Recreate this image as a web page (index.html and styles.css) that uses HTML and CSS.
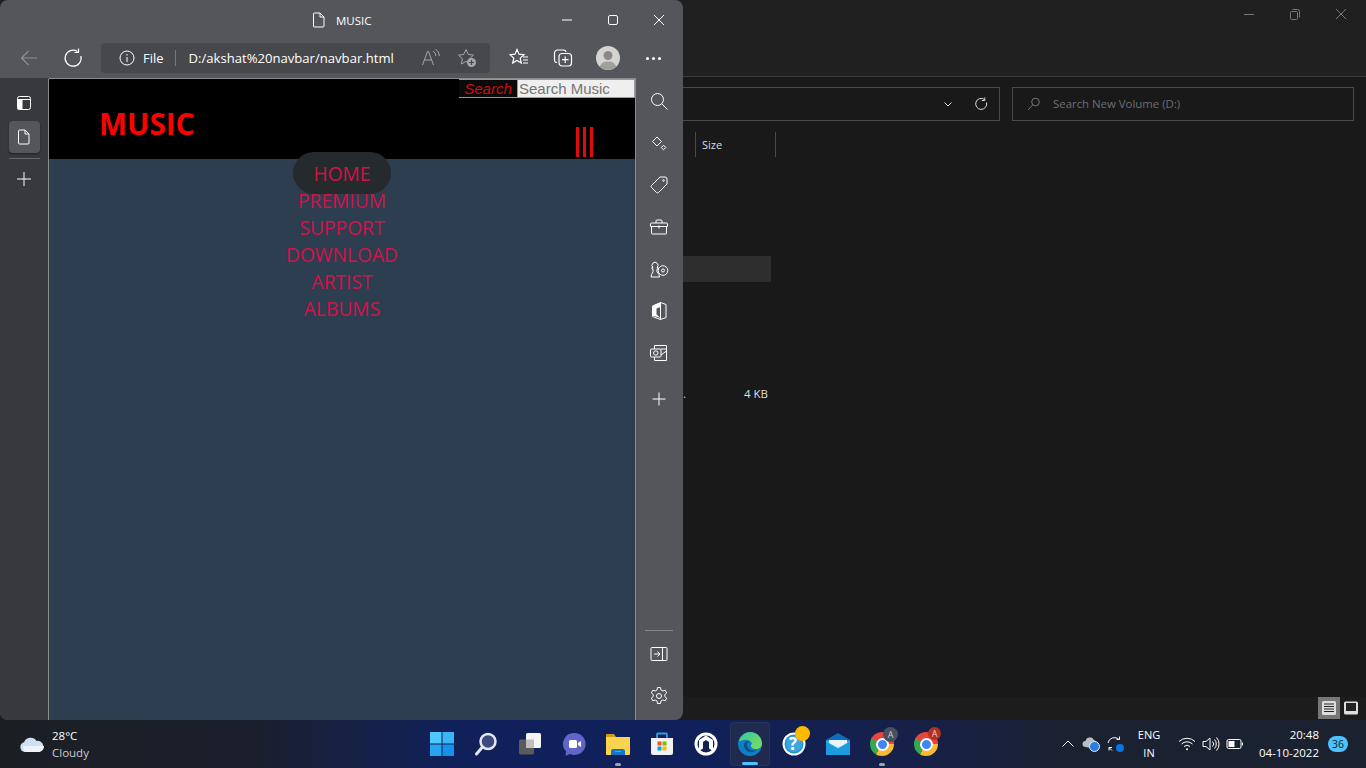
FILE: index.html
```html
<!DOCTYPE html>
<html lang="en">
<head>
<meta charset="UTF-8">
<meta name="viewport" content="width=device-width, initial-scale=1.0">
<title>MUSIC</title>
<link rel="stylesheet" href="styles.css">
</head>
<body>

<!-- Explorer window behind the browser -->
<div class="explorer">
  <div class="exp-title">
    <svg class="exp-ctl" viewBox="0 0 12 12"><path d="M1 6.500h10"/></svg>
    <svg class="exp-ctl" viewBox="0 0 12 12"><path d="M1.500 4.500a1 1 0 0 1 1-1h5a1 1 0 0 1 1 1v6a1 1 0 0 1-1 1h-5a1 1 0 0 1-1-1zM3.500 1.500h5a2 2 0 0 1 2 2v6"/></svg>
    <svg class="exp-ctl" viewBox="0 0 12 12"><path d="M1 1l10 10M11 1L1 11"/></svg>
  </div>
  <div class="exp-bar">
    <div class="exp-address">
      <svg class="exp-chevron" viewBox="0 0 10 10"><path d="M1.500 3.500L5 7l3.500-3.500"/></svg>
      <svg class="exp-refresh" viewBox="0 0 14 14"><path d="M10.500 2.500a5.500 5.500 0 1 0 2 3M10.800 0.500v3h-3"/></svg>
    </div>
    <div class="exp-search">
      <svg class="exp-lens" viewBox="0 0 14 14"><circle cx="8.500" cy="5" r="3.800"/><path d="M5.800 7.800L1 13"/></svg>
      <span>Search New Volume (D:)</span>
    </div>
  </div>
  <div class="exp-head"><span class="exp-col">Size</span></div>
  <div class="exp-list">
    <div class="exp-selected"></div>
    <div class="exp-row"><span>.</span><span class="exp-size">4 KB</span></div>
  </div>
  <div class="exp-status">
    <div class="view-btn view-btn-on">
      <svg viewBox="0 0 16 16"><rect x="1" y="1" width="14" height="14" rx="1.500" fill="#ddd"/><path d="M3 4h10M3 6.500h10M3 9h10M3 11.500h10" stroke="#222"/></svg>
    </div>
    <div class="view-btn">
      <svg viewBox="0 0 16 16"><rect x="1" y="1.500" width="14" height="13" rx="1.500" fill="#ddd"/><rect x="3" y="3" width="10" height="8" fill="#222"/></svg>
    </div>
  </div>
</div>

<!-- Edge window -->
<div class="browser">
  <div class="titlebar">
    <div class="tab-title">
      <svg class="ico-16" viewBox="0 0 16 16"><path d="M3.500 1h5.500l4 4v9a1 1 0 0 1-1 1h-8.500a1 1 0 0 1-1-1v-12a1 1 0 0 1 1-1zM9 1v4h4"/></svg>
      <span>MUSIC</span>
    </div>
    <div class="win-controls">
      <svg class="win-ctl" viewBox="0 0 12 12"><path d="M1 6h10"/></svg>
      <svg class="win-ctl" viewBox="0 0 12 12"><rect x="1.500" y="1.500" width="9" height="9" rx="1.500"/></svg>
      <svg class="win-ctl" viewBox="0 0 12 12"><path d="M1 1l10 10M11 1L1 11"/></svg>
    </div>
  </div>

  <div class="toolbar">
    <svg class="tool tool-back" viewBox="0 0 20 20"><path d="M18 10H2.500M9.500 3l-7 7 7 7"/></svg>
    <svg class="tool tool-reload" viewBox="0 0 20 20"><path d="M14.500 3.500a8 8 0 1 0 3.300 4.500M15.500 0.500v4h-4"/></svg>
    <div class="addressbar">
      <svg class="ico-16 info" viewBox="0 0 16 16"><circle cx="8" cy="8" r="7"/><path d="M8 7v5M8 4v1.500"/></svg>
      <span class="addr-file">File</span>
      <span class="addr-sep"></span>
      <span class="addr-url">D:/akshat%20navbar/navbar.html</span>
      <svg class="addr-ico read" viewBox="0 0 20 20"><path d="M1.500 17L6.500 3.500h1L12.500 17M3.500 12h7M12 3a6 6 0 0 1 3 5M14.500 1a9 9 0 0 1 4 7"/></svg>
      <svg class="addr-ico" viewBox="0 0 20 20"><path d="M9 1.500l2.300 5 5.200.6-3.900 3.600 1 5.300L9 13.400l-4.600 2.600 1-5.300-3.900-3.600 5.200-.6z"/><circle class="fill-grey" cx="14.500" cy="14.500" r="4.500"/><path class="plus-dark" d="M14.500 12v5M12 14.500h5"/></svg>
    </div>
    <svg class="tool tool-fav" viewBox="0 0 20 20"><path d="M8 1.500l2 4.700 5 .5-3.800 3.400 1.100 5-4.300-2.600-4.300 2.600 1.100-5L1 6.700l5-.5zM14 9h5M14 12h5M14 15h5"/></svg>
    <svg class="tool tool-coll" viewBox="0 0 20 20"><path d="M4 14.500a2.500 2.500 0 0 1-2.500-2.500V5A3 3 0 0 1 4.500 2h6a2.500 2.500 0 0 1 2.500 2"/><rect x="6" y="5.500" width="12.500" height="12.500" rx="3"/><path d="M12.200 8.500v6.500M9 11.700h6.500"/></svg>
    <div class="avatar">
      <svg viewBox="0 0 24 24"><circle cx="12" cy="12" r="12" fill="#d6d4d2"/><circle cx="12" cy="9.500" r="4.500" fill="#8a8987"/><path d="M3.800 20.500C5.500 16.500 8 15.500 12 15.500s6.500 1 8.200 5a12 12 0 0 1-16.400 0z" fill="#a09f9c"/></svg>
    </div>
    <div class="more"><i></i><i></i><i></i></div>
  </div>

  <div class="browser-body">
    <div class="tab-rail">
      <svg class="rail-ico" viewBox="0 0 16 16"><rect x="1.500" y="1.500" width="13" height="13" rx="2"/><path d="M1.500 4.500h13"/><rect class="fill-white" x="1.500" y="4.500" width="5" height="10"/></svg>
      <div class="rail-tab">
        <svg class="ico-16" viewBox="0 0 16 16"><path d="M3.500 1h5.500l4 4v9a1 1 0 0 1-1 1h-8.500a1 1 0 0 1-1-1v-12a1 1 0 0 1 1-1zM9 1v4h4"/></svg>
      </div>
      <div class="rail-line"></div>
      <svg class="rail-ico rail-plus" viewBox="0 0 16 16"><path d="M8 1v14M1 8h14"/></svg>
    </div>

    <div class="page">
      <div class="searchstrip">
        <label class="search-label">Search</label>
        <div class="search-input">Search Music</div>
      </div>
      <header class="site-head">
        <div class="logo">MUSIC</div>
        <div class="hamburger"><i></i><i></i><i></i></div>
      </header>
      <nav class="site-nav">
        <a class="nav-item active">HOME</a>
        <a class="nav-item">PREMIUM</a>
        <a class="nav-item">SUPPORT</a>
        <a class="nav-item">DOWNLOAD</a>
        <a class="nav-item">ARTIST</a>
        <a class="nav-item">ALBUMS</a>
      </nav>
    </div>

    <div class="side-rail">
      <svg class="side-ico" viewBox="0 0 20 20"><circle cx="8.500" cy="8.500" r="6"/><path d="M13 13l5.500 5.500"/></svg>
      <svg class="side-ico" viewBox="0 0 20 20"><path d="M8 4l4.500 4.500L8 13 3.500 8.500zM14.500 12.200l2.300 2.300-2.300 2.300-2.300-2.300z"/></svg>
      <svg class="side-ico" viewBox="0 0 20 20"><path d="M11 2h5a2 2 0 0 1 2 2v5L9.500 17.500a1.500 1.500 0 0 1-2 0l-5-5a1.500 1.500 0 0 1 0-2z"/><circle cx="14.500" cy="5.500" r=".8"/></svg>
      <svg class="side-ico" viewBox="0 0 20 20"><path d="M7 6V4a1 1 0 0 1 1-1h4a1 1 0 0 1 1 1v2M2.500 6h15a1 1 0 0 1 1 1v2.500h-17V7a1 1 0 0 1 1-1zM2.500 9.500V16a1 1 0 0 0 1 1h13a1 1 0 0 0 1-1V9.500M10 8.500v3"/></svg>
      <svg class="side-ico" viewBox="0 0 20 20"><path d="M2 18h8.500l-.5-2.500-2-2.500V10h1V8.500H8a3 3 0 1 0-4 0H3V10h1v3L2.500 15.500z"/><circle cx="14" cy="11.500" r="4.800"/><circle cx="14" cy="11.500" r="1.500"/></svg>
      <svg class="side-ico" viewBox="0 0 20 20"><path d="M11.500 1.500l5.500 2v13l-5.500 2-8-3V5zM11.500 1.500v17"/><path class="fill-white" d="M3.500 5l8-3.500v4.500l-4 1.500v6l4 3.500-8-2.500z"/></svg>
      <svg class="side-ico" viewBox="0 0 20 20"><path d="M5.500 6V2.500h12v15h-12V14M12 6h5.500M17.500 8l-5.500 4"/><rect x="1.500" y="6" width="10.500" height="8" rx="1"/><circle cx="6.800" cy="10" r="2.200"/></svg>
      <svg class="side-ico side-plus" viewBox="0 0 20 20"><path d="M10 3.500v13M3.500 10h13"/></svg>
      <div class="side-spacer"></div>
      <div class="side-line"></div>
      <svg class="side-ico" viewBox="0 0 20 20"><rect x="2" y="3.500" width="16" height="13" rx="1"/><path d="M13.500 3.500v13M5 10h6M8.500 7.500L11 10l-2.500 2.500"/></svg>
      <svg class="side-ico" viewBox="0 0 20 20"><circle cx="10" cy="10" r="2.500"/><path d="M8.500 1.500h3l.5 2.500 1.800 1 2.400-.8 1.500 2.600-1.900 1.700v2l1.900 1.700-1.500 2.600-2.400-.8-1.800 1-.5 2.500h-3l-.5-2.500-1.800-1-2.400.8-1.500-2.600 1.900-1.700v-2L2.300 6.800l1.500-2.600 2.400.8 1.800-1z"/></svg>
    </div>
  </div>
</div>

<!-- Windows 11 taskbar -->
<div class="taskbar">
  <div class="weather">
    <svg class="weather-ico" viewBox="0 0 26 20"><path d="M6 18a5 5 0 0 1-1-9.800A7 7 0 0 1 17.500 7 5.500 5.500 0 0 1 20 18z" fill="#cfe0f5"/><path d="M6 18a5 5 0 0 1-1-6h20a5.500 5.500 0 0 1-5 6z" fill="#eef3fa"/></svg>
    <div class="weather-text"><div>28°C</div><div class="weather-sub">Cloudy</div></div>
  </div>

  <div class="apps">
    <div class="app">
      <svg class="app-ico" viewBox="0 0 24 24"><path d="M0 0h11.500v11.500H0z" fill="#4fc8fb"/><path d="M12.500 0H24v11.500H12.500z" fill="#3ab6f7"/><path d="M0 12.500h11.500V24H0z" fill="#25a4f0"/><path d="M12.500 12.500H24V24H12.500z" fill="#1492ea"/></svg>
    </div>
    <div class="app">
      <svg class="app-ico" viewBox="0 0 24 24"><circle cx="14" cy="9.500" r="7.500" fill="#3b4a7d" stroke="#e3e6ee" stroke-width="2.500"/><path d="M8.500 15L2.500 22" stroke="#e3e6ee" stroke-width="3" stroke-linecap="round"/></svg>
    </div>
    <div class="app">
      <svg class="app-ico" viewBox="0 0 24 24"><rect x="1" y="7.500" width="15" height="15" rx="1.500" fill="#5a5a5a"/><rect x="8" y="1" width="15" height="15" rx="1.500" fill="#f5f5f5"/><rect x="8" y="7.500" width="8" height="8.500" fill="#bdbdbd"/></svg>
    </div>
    <div class="app">
      <svg class="app-ico" viewBox="0 0 24 24"><path d="M12.500 1a11 11 0 1 1-4.500 21l-4.500 2 .5-4.500A11 11 0 0 1 12.500 1z" fill="#6264c7"/><rect x="7" y="8" width="8" height="8" rx="1.500" fill="#fff"/><path d="M16 11l3-2v6l-3-2z" fill="#fff"/></svg>
    </div>
    <div class="app app-open">
      <svg class="app-ico" viewBox="0 0 24 24"><path d="M0 3a1 1 0 0 1 1-1h7l2 3h-10z" fill="#d69a0e"/><path d="M0 5h24v17a1 1 0 0 1-1 1H1a1 1 0 0 1-1-1z" fill="#fcd34d"/><path d="M5 19a2 2 0 0 1 2-2h10a2 2 0 0 1 2 2v4H5z" fill="#0e78c6"/><path d="M9 19.500h6" stroke="#49a8ea"/></svg>
    </div>
    <div class="app">
      <svg class="app-ico" viewBox="0 0 24 24"><path d="M7 6V2.500a1 1 0 0 1 1-1h8a1 1 0 0 1 1 1V6" fill="none" stroke="#2aa2e8" stroke-width="1.800"/><path d="M1 6h22v15a2 2 0 0 1-2 2H3a2 2 0 0 1-2-2z" fill="#f2f2f2"/><path d="M7.500 9.500h4v4h-4z" fill="#f25022"/><path d="M12.500 9.500h4v4h-4z" fill="#7fba00"/><path d="M7.500 14.500h4v4h-4z" fill="#00a4ef"/><path d="M12.500 14.500h4v4h-4z" fill="#ffb900"/></svg>
    </div>
    <div class="app">
      <svg class="app-ico" viewBox="0 0 24 24"><circle cx="12" cy="12" r="11.500" fill="#fff"/><circle cx="12" cy="12" r="8.500" fill="#14224f"/><path d="M12 3.500l7 4.500v11l-4-2.500V10l-3-2-3 2v6.500L5 19V8z" fill="#fff"/></svg>
    </div>
    <div class="app app-active">
      <svg class="app-ico" viewBox="0 0 24 24"><defs><linearGradient id="edgeG" x1="0" y1="0" x2="1" y2="1"><stop offset="0" stop-color="#36c5a0"/><stop offset="1" stop-color="#7fe05a"/></linearGradient></defs><circle cx="12" cy="12" r="12" fill="#0f7fc4"/><path d="M1 9C3 3 8 0 12 0c7 0 12 5 12 12 0 3-3 5-6 5-3 0-5-1-5-3 0-1 .5-1.500 1-2.500C13 9 9 7 6 8c-2 .5-4 1-5 1z" fill="url(#edgeG)"/><path d="M6 13c0 4 3 7 7 7 2 0 4-.5 6-2-1 .5-1.500 .5-3 .5-4 0-6-2-7-5-.5-2 1-3.500 3-4-3-1-6 0-6 3.500z" fill="#0b4f8c"/></svg>
      <span class="active-mark"></span>
    </div>
    <div class="app">
      <svg class="app-ico" viewBox="0 0 24 24"><circle cx="12" cy="12" r="11.500" fill="#fff"/><circle cx="12" cy="12" r="9.500" fill="#1f94d8"/><circle cx="12" cy="12" r="8" fill="#fff" opacity=".15"/></svg>
      <span class="help-q">?</span>
      <span class="help-dot"></span>
    </div>
    <div class="app">
      <svg class="app-ico" viewBox="0 0 24 24"><path d="M0 8L12 1l12 7v1H0z" fill="#0f6cbd"/><path d="M0 8.500h24V22a1 1 0 0 1-1 1H1a1 1 0 0 1-1-1z" fill="#35a9e9"/><path d="M3 8h18v3l-9 5-9-5z" fill="#e8f4fc"/><path d="M0 10l12 7 12-7v12a1 1 0 0 1-1 1H1a1 1 0 0 1-1-1z" fill="#1e9be0"/></svg>
    </div>
    <div class="app app-open">
      <div class="chrome"><div class="chrome-eye"></div></div>
      <span class="chrome-badge chrome-badge-grey">A</span>
    </div>
    <div class="app">
      <div class="chrome"><div class="chrome-eye"></div></div>
      <span class="chrome-badge chrome-badge-red">A</span>
    </div>
  </div>

  <div class="tray">
    <svg class="tray-ico chevron" viewBox="0 0 14 14"><path d="M1.500 9.500L7 4l5.500 5.500"/></svg>
    <svg class="tray-ico cloud" viewBox="0 0 18 16"><path d="M3.500 11a3 3 0 0 1 0-6 4.500 4.500 0 0 1 8.500-1 3.500 3.500 0 0 1 2.500 3.500L9 12z" fill="#b9bdc4" stroke="none"/><circle cx="12.500" cy="10.500" r="5" fill="#2b7de0" stroke="#e8eef6"/></svg>
    <div class="tray-sync">
      <svg class="tray-ico" viewBox="0 0 18 16"><path d="M2 7a6.500 6.500 0 0 1 11-3.500M13.500 .5v3h-3M3 14.500v-3h3M3 11.500l3 3"/></svg>
      <span class="sync-dot"></span>
    </div>
    <div class="lang"><div>ENG</div><div>IN</div></div>
    <svg class="tray-ico wifi" viewBox="0 0 18 16"><path d="M1 5.500a11.500 11.500 0 0 1 16 0M3.500 8a8 8 0 0 1 11 0M6 10.500a4.500 4.500 0 0 1 6 0"/><circle class="fill-white" cx="9" cy="13.300" r="1"/></svg>
    <svg class="tray-ico volume" viewBox="0 0 18 16"><path d="M1 5.500h3L8 2v12l-4-3.500H1zM10.500 5.500a3.500 3.500 0 0 1 0 5M12.500 3.500a6.500 6.500 0 0 1 0 9M14.500 1.500a9.500 9.500 0 0 1 0 13"/></svg>
    <svg class="tray-ico battery" viewBox="0 0 18 16"><rect x="1" y="3.500" width="14" height="9" rx="1.500"/><rect class="fill-white" x="2.500" y="5" width="6" height="6"/><path d="M16.500 6.500v3"/></svg>
    <div class="clock"><div>20:48</div><div>04-10-2022</div></div>
    <div class="notify">36</div>
  </div>
</div>

</body>
</html>
```

FILE: styles.css
```css
/* General Styles */
html, body {
  margin: 0;
  padding: 0;
}

body {
  position: relative;
  width: 1366px;
  height: 768px;
  overflow: hidden;
  background-color: #1a1a1a;
  font-family: "Open Sans", "Noto Sans", sans-serif;
  color: #fff;
}

svg {
  display: block;
  flex: none;
}

.fill-white {
  fill: #fff;
  stroke: none;
}

.fill-grey {
  fill: #a5a6a8;
  stroke: none;
}

.ico-16 {
  width: 16px;
  height: 16px;
  fill: none;
  stroke: #fff;
  stroke-width: 1;
}

/* Explorer window */
.explorer {
  position: absolute;
  left: 0;
  top: 0;
  width: 1366px;
  height: 720px;
  display: flex;
  flex-direction: column;
  background-color: #191919;
}

.exp-title {
  height: 77px;
  flex: none;
  display: flex;
  justify-content: flex-end;
  gap: 34px;
  padding: 8px 19px 0 0;
  box-sizing: border-box;
  background-color: #202020;
  border-bottom: 1px solid #3a3a3a;
}

.exp-ctl {
  width: 12px;
  height: 12px;
  fill: none;
  stroke: #777;
  stroke-width: 1;
}

.exp-bar {
  height: 43px;
  flex: none;
  display: flex;
  align-items: center;
  gap: 12px;
  padding: 10px 12px 0 670px;
  box-sizing: border-box;
}

.exp-address {
  width: 330px;
  height: 34px;
  box-sizing: border-box;
  border: 1px solid #4a4a4a;
  display: flex;
  align-items: center;
  justify-content: flex-end;
  gap: 21px;
  padding-right: 11px;
}

.exp-chevron {
  width: 10px;
  height: 10px;
  fill: none;
  stroke: #ddd;
}

.exp-refresh {
  width: 14px;
  height: 14px;
  fill: none;
  stroke: #ddd;
  stroke-width: 1;
}

.exp-search {
  flex: 1;
  height: 34px;
  box-sizing: border-box;
  border: 1px solid #4a4a4a;
  display: flex;
  align-items: center;
  gap: 12px;
  padding-left: 14px;
  font-size: 11.400px;
  color: #6f6f6f;
}

.exp-lens {
  width: 14px;
  height: 14px;
  fill: none;
  stroke: #777;
}

.exp-head {
  height: 25px;
  flex: none;
  margin-top: 12px;
  padding-left: 695px;
  display: flex;
}

.exp-col {
  width: 81px;
  box-sizing: border-box;
  border-left: 1px solid #4a4a4a;
  border-right: 1px solid #4a4a4a;
  padding-left: 6px;
  font-size: 11px;
  line-height: 25px;
  color: #ddd;
}

.exp-list {
  flex: 1;
  display: flex;
  flex-direction: column;
  padding-top: 99px;
}

.exp-selected {
  width: 771px;
  height: 26px;
  background-color: #2e2e2e;
}

.exp-row {
  margin-top: 103px;
  width: 768px;
  display: flex;
  justify-content: flex-end;
  gap: 58px;
  font-size: 11.500px;
  line-height: 18px;
  color: #ddd;
}

.exp-status {
  height: 23px;
  flex: none;
  display: flex;
  justify-content: flex-end;
  padding-right: 4px;
  background-color: #1c1c1c;
}

.view-btn {
  width: 22px;
  height: 22px;
  display: flex;
  align-items: center;
  justify-content: center;
}

.view-btn svg {
  width: 16px;
  height: 16px;
}

.view-btn-on {
  background-color: #777;
}

/* Edge window */
.browser {
  position: absolute;
  left: 0;
  top: 0;
  width: 683px;
  height: 720px;
  display: flex;
  flex-direction: column;
  overflow: hidden;
  border-radius: 8px;
  background-color: #55565b;
}

.titlebar {
  height: 40px;
  flex: none;
  position: relative;
  display: flex;
  justify-content: flex-end;
  align-items: center;
}

.tab-title {
  position: absolute;
  left: 311px;
  top: 12px;
  display: flex;
  align-items: center;
  gap: 9px;
  font-size: 11.500px;
}

.win-controls {
  display: flex;
  gap: 34px;
  padding-right: 18px;
}

.win-ctl {
  width: 12px;
  height: 12px;
  fill: none;
  stroke: #fff;
  stroke-width: 1;
}

/* Toolbar */
.toolbar {
  height: 38px;
  flex: none;
  display: flex;
  align-items: center;
  padding-left: 19px;
  padding-bottom: 2px;
  box-sizing: border-box;
}

.tool {
  width: 20px;
  height: 20px;
  fill: none;
  stroke: #fff;
  stroke-width: 1.200;
}

.tool-back {
  stroke: #8d8e92;
}

.tool-reload {
  margin-left: 24px;
}

.addressbar {
  width: 389px;
  height: 30px;
  margin-left: 18px;
  display: flex;
  align-items: center;
  box-sizing: border-box;
  padding-left: 18px;
  border-radius: 4px;
  background-color: #47484c;
  font-size: 13px;
}

.addr-file {
  margin-left: 8px;
}

.addr-sep {
  width: 1px;
  height: 16px;
  margin: 0 13px 0 11px;
  background-color: #77787b;
}

.addr-url {
  width: 232px;
  font-size: 13.100px;
  white-space: nowrap;
}

.addr-ico {
  width: 20px;
  height: 20px;
  fill: none;
  stroke: #a5a6a8;
  stroke-width: 1;
}

.read {
  margin-right: 16px;
}

.plus-dark {
  stroke: #47484c;
  stroke-width: 1.200;
}

.tool-fav {
  margin-left: 19px;
}

.tool-coll {
  margin-left: 24px;
}

.avatar {
  width: 24px;
  height: 24px;
  margin-left: 23px;
}

.more {
  display: flex;
  gap: 3px;
  margin-left: 26px;
}

.more i {
  width: 3px;
  height: 3px;
  border-radius: 50%;
  background-color: #fff;
}

/* Browser body */
.browser-body {
  flex: 1;
  display: flex;
  min-height: 0;
}

.tab-rail {
  width: 49px;
  flex: none;
  display: flex;
  flex-direction: column;
  align-items: center;
  padding-top: 16px;
  box-sizing: border-box;
  background-color: #38393c;
  border-right: 1px solid #8a8b8d;
  border-top: 1px solid #38393c;
}

.rail-ico {
  width: 16px;
  height: 16px;
  fill: none;
  stroke: #fff;
  stroke-width: 1;
}

.rail-tab {
  width: 31px;
  height: 32px;
  margin-top: 10px;
  display: flex;
  align-items: center;
  justify-content: center;
  border-radius: 4px;
  background-color: #55565b;
  box-shadow: 0 1px 2px #222;
}

.rail-line {
  width: 31px;
  height: 1px;
  margin-top: 5px;
  background-color: #66676a;
}

.rail-plus {
  margin-top: 12px;
}

/* Page Styles */
.page {
  flex: 1;
  min-width: 0;
  position: relative;
  display: flex;
  flex-direction: column;
  background-color: #2c3e50;
  border-top: 1px solid #8a8b8d;
}

.searchstrip {
  position: absolute;
  right: 0;
  top: 0;
  display: flex;
  gap: 1px;
  height: 19px;
  background-color: #999;
  font-family: "Liberation Sans", Arial, sans-serif;
  font-size: 15px;
}

.search-label {
  width: 58px;
  margin: 1px 0;
  text-align: center;
  line-height: 17px;
  font-style: italic;
  color: #cc0d0d;
  background-color: #0a0a0a;
}

.search-input {
  width: 115px;
  margin: 1px 1px 1px 0;
  padding-left: 1px;
  line-height: 17px;
  color: #757575;
  background-color: #efefef;
}

.site-head {
  height: 80px;
  flex: none;
  display: flex;
  justify-content: space-between;
  background-color: #000;
}

.logo {
  margin: 23px 0 0 50px;
  font-size: 29.700px;
  line-height: 44px;
  font-weight: 700;
  color: #ff0000;
}

.hamburger {
  display: flex;
  gap: 4px;
  margin: 48px 42px 0 0;
}

.hamburger i {
  width: 3px;
  height: 30px;
  background-color: #e00a0a;
}

.site-nav {
  position: relative;
  margin-top: -7px;
  display: flex;
  flex-direction: column;
  align-items: center;
}

.nav-item {
  font-size: 19.200px;
  line-height: 27px;
  color: #d01349;
}

.active {
  width: 98px;
  height: 42px;
  line-height: 44px;
  margin-bottom: -7px;
  text-align: center;
  border-radius: 21px;
  background-color: #252a2c;
}

/* Right rail */
.side-rail {
  width: 48px;
  flex: none;
  box-sizing: border-box;
  display: flex;
  flex-direction: column;
  align-items: center;
  gap: 22px;
  padding: 13px 1px 14px 0;
  border-left: 1px solid #8a8b8d;
}

.side-ico {
  width: 20px;
  height: 20px;
  fill: none;
  stroke: #fff;
  stroke-width: 1;
  stroke-linejoin: round;
}

.side-plus {
  margin-top: 4px;
}

.side-spacer {
  flex: 1;
}

.side-line {
  width: 28px;
  height: 1px;
  margin-bottom: -9px;
  background-color: #85868a;
}

/* Taskbar */
.taskbar {
  position: absolute;
  left: 0;
  bottom: 0;
  width: 1366px;
  height: 48px;
  display: grid;
  grid-template-columns: 420px 528px 1fr;
  align-items: center;
  background: linear-gradient(90deg, #1b1f24 0, #1b1f2c 18%, #10215a 33%, #10205a 50%, #16204a 66%, #1a2130 78%, #1a2230 100%);
  font-size: 12px;
}

.weather {
  display: flex;
  align-items: center;
  gap: 7px;
  padding-left: 19px;
}

.weather-ico {
  width: 26px;
  height: 20px;
}

.weather-text {
  line-height: 17px;
  font-size: 11.500px;
}

.weather-sub {
  color: #ccc;
}

.apps {
  display: flex;
}

.app {
  position: relative;
  width: 44px;
  height: 44px;
  display: flex;
  align-items: center;
  justify-content: center;
}

.app-ico {
  width: 24px;
  height: 24px;
}

.app-open::after {
  content: "";
  position: absolute;
  left: 19px;
  bottom: 0;
  width: 6px;
  height: 3px;
  border-radius: 2px;
  background-color: #9ba3b4;
}

.app-active {
  width: 40px;
  margin: 0 2px;
  border-radius: 4px;
  background-color: #20294e;
  box-shadow: inset 0 0 0 1px #2a3359;
}

.active-mark {
  position: absolute;
  left: 12px;
  bottom: 1px;
  width: 16px;
  height: 3px;
  border-radius: 2px;
  background-color: #4cc2ff;
}

.help-q {
  position: absolute;
  left: 17px;
  top: 10px;
  font-size: 17px;
  line-height: 24px;
  font-weight: 700;
  color: #fff;
}

.help-dot {
  position: absolute;
  left: 23px;
  top: 4px;
  width: 15px;
  height: 15px;
  border-radius: 50%;
  background-color: #ffb900;
}

.chrome {
  width: 24px;
  height: 24px;
  display: flex;
  align-items: center;
  justify-content: center;
  border-radius: 50%;
  background: conic-gradient(#e8453c 0 25%, #f9bb2d 25% 58%, #34a853 58% 83%, #e8453c 83%);
}

.chrome-eye {
  width: 9px;
  height: 9px;
  border-radius: 50%;
  border: 2px solid #fff;
  background-color: #4285f4;
}

.chrome-badge {
  position: absolute;
  left: 23px;
  top: 5px;
  width: 15px;
  height: 15px;
  border-radius: 50%;
  text-align: center;
  font-size: 9px;
  line-height: 15px;
}

.chrome-badge-grey {
  background-color: #47505c;
  color: #cfd3d8;
}

.chrome-badge-red {
  left: 24px;
  width: 13px;
  height: 13px;
  line-height: 13px;
  background-color: #b23121;
  color: #f0c8c0;
}

/* System tray */
.tray {
  display: flex;
  align-items: center;
  padding-left: 112px;
}

.tray-ico {
  width: 18px;
  height: 16px;
  fill: none;
  stroke: #fff;
  stroke-width: 1;
}

.chevron {
  width: 14px;
  height: 14px;
  margin-left: 1px;
}

.cloud {
  margin-left: 7px;
}

.tray-sync {
  position: relative;
  margin-left: 6px;
}

.sync-dot {
  position: absolute;
  left: 10px;
  top: 8px;
  width: 8px;
  height: 8px;
  border-radius: 50%;
  background-color: #0a74e0;
}

.lang {
  width: 34px;
  margin-left: 8px;
  text-align: center;
  font-size: 11px;
  line-height: 18px;
}

.wifi {
  margin-left: 12px;
}

.volume {
  margin-left: 6px;
}

.battery {
  margin-left: 6px;
}

.clock {
  width: 75px;
  text-align: right;
  font-size: 11.500px;
  line-height: 18px;
}

.notify {
  width: 20px;
  height: 16px;
  margin-left: 9px;
  border-radius: 8px;
  text-align: center;
  font-size: 10.500px;
  line-height: 16px;
  color: #0b1a2a;
  background-color: #4cc2ff;
}
```
